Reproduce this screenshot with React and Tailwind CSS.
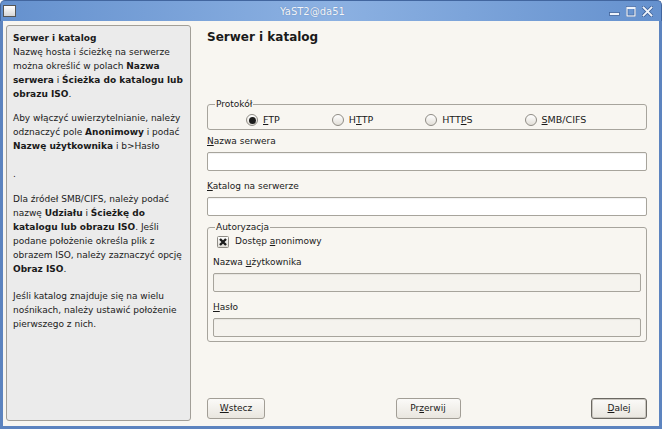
import React from 'react';

const Mn = ({ children }) => (
  <span className="underline underline-offset-[1px] decoration-[1px]">{children}</span>
);

const Radio = ({ checked, children }) => (
  <div className="flex items-center gap-[5px] h-[14px]">
    <span className="w-[12px] h-[12px] rounded-full border border-[#8f8c85] bg-linear-to-b from-white to-[#e2dfd8] flex items-center justify-center">
      {checked && <span className="w-[7px] h-[7px] rounded-full bg-[#1c1c1c]" />}
    </span>
    <span className="text-[9.5px] leading-[14px]">{children}</span>
  </div>
);

const Field = ({ disabled }) => (
  <div
    className={`h-[19px] rounded-[2px] border border-[#a7a49c] shadow-[inset_0_1px_1px_rgba(0,0,0,0.06)] ${
      disabled ? 'bg-[#f5f3ee]' : 'bg-white'
    }`}
  />
);

const Button = ({ width, children, isDefault }) => (
  <div
    className={`${width} h-[21px] rounded-[3px] border ${
      isDefault ? 'border-[#6b6862] shadow-[inset_0_0_0_1px_#c9c6bf]' : 'border-[#a29e96]'
    } bg-linear-to-b from-[#fbfaf8] to-[#e9e6df] flex items-center justify-center text-[9px]`}
  >
    {children}
  </div>
);

const WindowButtons = () => (
  <div className="flex items-center gap-[6px] mr-[8px]">
    <svg width="11" height="12" viewBox="0 0 11 12">
      <rect x="0.5" y="7.5" width="10" height="3" fill="#eef3fb" stroke="#3f6299" strokeWidth="0.8" />
    </svg>
    <svg width="10" height="11" viewBox="0 0 10 11">
      <rect x="1" y="1.5" width="8" height="8.5" fill="none" stroke="#3f6299" strokeWidth="2.6" />
      <rect x="1" y="1.5" width="8" height="8.5" fill="none" stroke="#eef3fb" strokeWidth="1.3" />
      <line x1="1" y1="2.2" x2="9" y2="2.2" stroke="#eef3fb" strokeWidth="1.6" />
    </svg>
    <svg width="11" height="11" viewBox="0 0 11 11">
      <path d="M1.5 1.5 L9.5 9.5 M9.5 1.5 L1.5 9.5" stroke="#3f6299" strokeWidth="3.4" strokeLinecap="square" />
      <path d="M1.5 1.5 L9.5 9.5 M9.5 1.5 L1.5 9.5" stroke="#eef3fb" strokeWidth="1.8" strokeLinecap="square" />
    </svg>
  </div>
);

const Line = ({ children }) => <div className="whitespace-nowrap">{children}</div>;

export default function App() {
  return (
    <div className="w-[662px] h-[429px] flex flex-col overflow-hidden font-['DejaVu_Sans',sans-serif] text-[#1a1a1a]">
      {/* title bar */}
      <div className="h-[21px] flex items-center rounded-t-[5px] border-t border-x border-[#42669f] bg-linear-to-r from-[#6591ce] via-[#8cb1e2] to-[#6591ce]">
        <div className="ml-[2px] w-[13px] h-[12px] border border-[#555] bg-linear-to-b from-white to-[#d6d6d6]" />
        <div className="flex-1 text-center text-[10px] text-[#f3f6fb] [text-shadow:0_0_1px_rgba(40,70,120,0.5)]">
          YaST2@da51
        </div>
        <WindowButtons />
      </div>

      {/* body */}
      <div className="flex-1 flex bg-[#f8f6f1] border-x-[3px] border-b-[3px] border-[#5d84bf]">
        {/* help panel */}
        <div className="ml-[3px] mt-[4px] mb-[5px] w-[185px] rounded-[3px] border border-[#a29f98] bg-[#ebebeb] px-[6px] pt-[5px] text-[9px] leading-[14px]">
          <div className="font-bold">Serwer i katalog</div>
          <Line>Nazwę hosta i ścieżkę na serwerze</Line>
          <Line>
            można określić w polach <b>Nazwa</b>
          </Line>
          <Line>
            <b>serwera</b> i <b>Ścieżka do katalogu lub</b>
          </Line>
          <Line>
            <b>obrazu ISO</b>.
          </Line>

          <div className="mt-[10px]">
            <Line>Aby włączyć uwierzytelnianie, należy</Line>
            <Line>
              odznaczyć pole <b>Anonimowy</b> i podać
            </Line>
            <Line>
              <b>Nazwę użytkownika</b> i b&gt;Hasło
            </Line>
            <div className="h-[14px]" />
            <Line>.</Line>
          </div>

          <div className="mt-[11px]">
            <Line>Dla źródeł SMB/CIFS, należy podać</Line>
            <Line>
              nazwę <b>Udziału</b> i <b>Ścieżkę do</b>
            </Line>
            <Line>
              <b>katalogu lub obrazu ISO</b>. Jeśli
            </Line>
            <Line>podane położenie określa plik z</Line>
            <Line>obrazem ISO, należy zaznaczyć opcję</Line>
            <Line>
              <b>Obraz ISO</b>.
            </Line>
          </div>

          <div className="mt-[13px]">
            <Line>Jeśli katalog znajduje się na wielu</Line>
            <Line>nośnikach, należy ustawić położenie</Line>
            <Line>pierwszego z nich.</Line>
          </div>
        </div>

        {/* main form */}
        <div className="flex-1 ml-[16px] mr-[12px] pt-[8px] pb-[7px] flex flex-col text-[9px]">
          <div className="text-[12px] leading-[16px] font-bold">Serwer i katalog</div>

          <fieldset className="mt-[54px] border border-[#a7a49d] rounded-[3px]">
            <legend className="ml-[7px] px-[1px] text-[9px] leading-[11px]">Protokół</legend>
            <div className="mt-[3px] mb-[2px] pl-[38px] flex gap-[52px]">
              <Radio checked>
                <Mn>F</Mn>TP
              </Radio>
              <Radio>
                H<Mn>T</Mn>TP
              </Radio>
              <Radio>
                HTT<Mn>P</Mn>S
              </Radio>
              <Radio>
                <Mn>S</Mn>MB/CIFS
              </Radio>
            </div>
          </fieldset>

          <div className="mt-[5px] leading-[12px]">
            <Mn>N</Mn>azwa serwera
          </div>
          <div className="mt-[5px]">
            <Field />
          </div>
          <div className="mt-[9px] leading-[12px]">
            <Mn>K</Mn>atalog na serwerze
          </div>
          <div className="mt-[5px]">
            <Field />
          </div>

          <fieldset className="mt-[6px] border border-[#a7a49d] rounded-[3px] px-[5px] pb-[4px]">
            <legend className="ml-[2px] px-[1px] text-[9px] leading-[11px]">Autoryzacja</legend>
            <div className="mt-[3px] ml-[4px] flex items-center gap-[6px] h-[12px]">
              <svg width="12" height="12" viewBox="0 0 12 12">
                <defs>
                  <linearGradient id="cb" x1="0" y1="0" x2="0" y2="1">
                    <stop offset="0" stopColor="#ffffff" />
                    <stop offset="1" stopColor="#dedbd4" />
                  </linearGradient>
                </defs>
                <rect x="0.5" y="0.5" width="11" height="11" rx="1" fill="url(#cb)" stroke="#8f8c85" />
                <path d="M3 3 L9 9 M9 3 L3 9" stroke="#1c1c1c" strokeWidth="2.4" />
              </svg>
              <span>
                Dostęp <Mn>a</Mn>nonimowy
              </span>
            </div>
            <div className="mt-[8px] leading-[12px]">
              Nazwa <Mn>u</Mn>żytkownika
            </div>
            <div className="mt-[5px]">
              <Field disabled />
            </div>
            <div className="mt-[9px] leading-[12px]">
              <Mn>H</Mn>asło
            </div>
            <div className="mt-[5px]">
              <Field disabled />
            </div>
          </fieldset>

          <div className="mt-auto flex justify-between items-end">
            <Button width="w-[58px]">
              <Mn>W</Mn>stecz
            </Button>
            <Button width="w-[65px]">
              Pr<Mn>z</Mn>erwij
            </Button>
            <Button width="w-[56px]" isDefault>
              <Mn>D</Mn>alej
            </Button>
          </div>
        </div>
      </div>
    </div>
  );
}
